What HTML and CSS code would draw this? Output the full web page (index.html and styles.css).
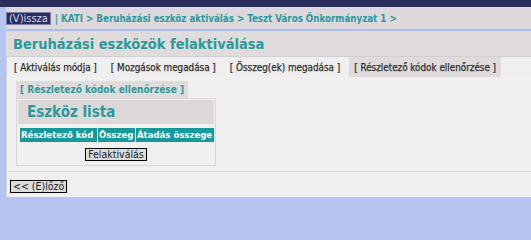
FILE: index.html
```html
<!DOCTYPE html>
<html lang="hu">
<head>
<meta charset="utf-8">
<title>Beruházási eszközök felaktiválása</title>
<link rel="stylesheet" href="styles.css">
</head>
<body>
<div class="topbar"></div>
<div class="main">
  <div class="crumbs">
    <span class="back">(V)issza</span>
    <span class="path">| KATI &gt; Beruházási eszköz aktiválás &gt; Teszt Város Önkormányzat 1 &gt;</span>
  </div>
  <div class="title">Beruházási eszközök felaktiválása</div>
  <div class="tabs">
    <span class="tab">[ Aktiválás módja ]</span>
    <span class="tab">[ Mozgások megadása ]</span>
    <span class="tab">[ Összeg(ek) megadása ]</span>
    <span class="tab active">[ Részletező kódok ellenőrzése ]</span>
  </div>
  <div class="content">
    <div class="subtab">[ Részletező kódok ellenőrzése ]</div>
    <div class="box">
      <div class="boxhead">Eszköz lista</div>
      <div class="thead">
        <span class="th c1">Részletező kód</span>
        <span class="th c2">Összeg</span>
        <span class="th c3">Átadás összege</span>
      </div>
      <div class="actions"><span class="btn">Felaktiválás</span></div>
    </div>
    <div class="sep"></div>
    <div class="nav"><span class="btn">&lt;&lt; (E)lőző</span></div>
  </div>
</div>
</body>
</html>
```
FILE: styles.css
```css
html, body {
  margin: 0;
  padding: 0;
}
body {
  background: #b6c4f2;
  font-family: "DejaVu Sans Condensed", "DejaVu Sans", sans-serif;
  width: 531px;
  height: 215px;
  overflow: hidden;
}
.topbar {
  height: 7px;
  background: #2b2d5c;
}
.main {
  margin-left: 6px;
}
.crumbs {
  background: #dcd8dc;
  display: flex;
  align-items: center;
  border-bottom: 2px solid #a9bff0;
  box-sizing: border-box;
  height: 24px;
  white-space: nowrap;
}
.back {
  background: #2b2d5c;
  color: #d6d6f6;
  font-size: 11px;
  line-height: 11px;
  padding: 0 2px;
  border: 1px solid #7e80a8;
  margin-right: 4px;
}
.path {
  color: #2a9a9c;
  font-weight: bold;
  font-size: 9.7px;
}
.title {
  height: 25px;
  background: #e0dcdc;
  color: #2a9a9c;
  font-weight: bold;
  font-size: 14.5px;
  display: flex;
  align-items: center;
  padding-left: 7px;
  border-bottom: 1px solid #cfcfd4;
  white-space: nowrap;
}
.tabs {
  height: 20px;
  background: #f0efef;
  display: flex;
  align-items: stretch;
  padding-left: 2px;
  gap: 4px;
  border-left: 1px solid #d0d0d0;
  white-space: nowrap;
}
.tab {
  display: flex;
  align-items: center;
  padding: 0 5px;
  font-size: 9.8px;
  color: #2e2e2e;
  -webkit-text-stroke: 0.25px #2e2e2e;
}
.tab.active {
  background: #e0dcdc;
}
.content {
  background: #f0f0f0;
  padding: 4px 0 0 9px;
  height: 120px;
  box-sizing: border-box;
  border-left: 1px solid #d8d8d8;
  display: flex;
  flex-direction: column;
  align-items: flex-start;
}
.subtab {
  background: #e0dcdc;
  color: #2a9a9c;
  font-weight: bold;
  font-size: 10px;
  height: 17px;
  line-height: 17px;
  padding: 0 4px;
  white-space: nowrap;
}
.box {
  width: 200px;
  border: 1px solid #d8d8d8;
  box-sizing: border-box;
  padding: 1px 1px 4px;
}
.boxhead {
  background: #dcd8d8;
  color: #2a9a9c;
  font-weight: bold;
  font-size: 15px;
  height: 24px;
  line-height: 24px;
  padding-left: 9px;
}
.thead {
  display: flex;
  gap: 1px;
  margin-top: 4px;
  padding-left: 2px;
}
.th {
  background: #17999b;
  color: #ffffff;
  font-weight: bold;
  font-size: 9.5px;
  height: 14px;
  line-height: 14px;
  white-space: nowrap;
  overflow: hidden;
  padding-left: 1px;
  box-sizing: border-box;
}
.c1 { width: 77px; }
.c2 { width: 37px; }
.c3 { width: 78px; }
.actions {
  display: flex;
  justify-content: center;
  padding-top: 6px;
}
.btn {
  display: block;
  border: 1px solid #000;
  background: #dcdcdc;
  color: #222;
  font-size: 10.5px;
  height: 13px;
  line-height: 11px;
  padding: 0 2px;
  box-sizing: border-box;
  white-space: nowrap;
}
.sep {
  align-self: stretch;
  height: 1px;
  background: #dadada;
  margin: 5px 0 0 -8px;
}
.nav {
  padding-top: 8px;
  margin-left: -6px;
}
```
